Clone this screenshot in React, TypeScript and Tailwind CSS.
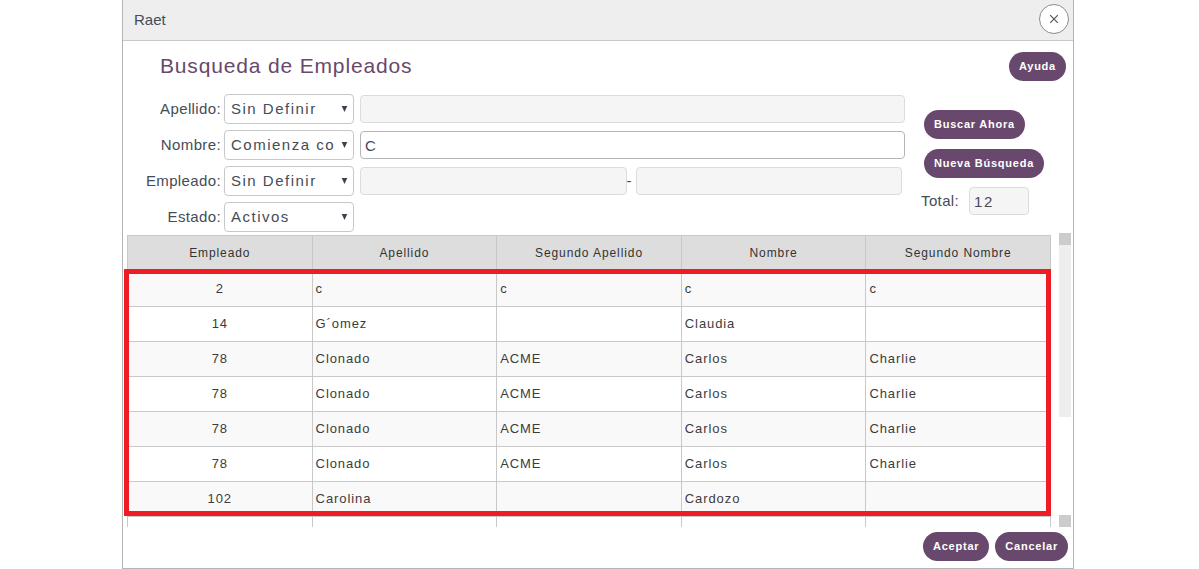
import type { ReactNode } from "react";

interface Employee {
  id: string;
  lastName: string;
  secondLastName: string;
  firstName: string;
  secondName: string;
}

const clonado: Employee = {
  id: "78",
  lastName: "Clonado",
  secondLastName: "ACME",
  firstName: "Carlos",
  secondName: "Charlie",
};

const employees: Employee[] = [
  { id: "2", lastName: "c", secondLastName: "c", firstName: "c", secondName: "c" },
  { id: "14", lastName: "G´omez", secondLastName: "", firstName: "Claudia", secondName: "" },
  clonado,
  clonado,
  clonado,
  clonado,
  { id: "102", lastName: "Carolina", secondLastName: "", firstName: "Cardozo", secondName: "" },
  { id: "", lastName: "", secondLastName: "", firstName: "", secondName: "" },
];

const columns = ["Empleado", "Apellido", "Segundo Apellido", "Nombre", "Segundo Nombre"];

const operators = ["Sin Definir", "Comienza con", "Contiene"];

function PillButton({ children }: { children: ReactNode }) {
  return (
    <button
      type="button"
      className="h-[29px] shrink-0 rounded-full bg-[#69486d] px-[10px] text-[11px] font-bold tracking-[0.07em] whitespace-nowrap text-white"
    >
      {children}
    </button>
  );
}

function TextField({ id, label, value = "", disabled = false }: {
  id?: string;
  label: string;
  value?: string;
  disabled?: boolean;
}) {
  return (
    <input
      id={id}
      type="text"
      aria-label={label}
      defaultValue={value}
      disabled={disabled}
      className="h-7 w-full min-w-0 flex-1 rounded-[4px] border border-[#b5b5b5] bg-white px-1 text-[15px] tracking-widest text-[#444c58] disabled:border-[#dcdcdc] disabled:bg-[#f5f5f5]"
    />
  );
}

function FilterRow({ id, label, options, value, children }: {
  id: string;
  label: string;
  options: string[];
  value: string;
  children?: ReactNode;
}) {
  return (
    <div className="flex items-center">
      <label htmlFor={id} className="mr-[3px] w-24 shrink-0 text-right tracking-wide">
        {label}:
      </label>
      <div className="relative mr-[6px] w-[130px] shrink-0">
        <select
          id={id}
          defaultValue={value}
          className="block h-[30px] w-full appearance-none rounded-[4px] border border-[#c8c8c8] bg-white pr-[18px] pl-[6px] text-[15px] tracking-widest text-[#444c58]"
        >
          {options.map((option) => (
            <option key={option}>{option}</option>
          ))}
        </select>
        <svg viewBox="0 0 7 6" className="pointer-events-none absolute top-3 right-[6px] h-[6px] w-[7px]" fill="#37434d">
          <path d="M0.7 0h5.6L3.5 6z" />
        </svg>
      </div>
      {children}
    </div>
  );
}

export default function App() {
  return (
    <div className="flex min-h-screen justify-center bg-white pr-[3px] font-['Liberation_Sans',Arial,sans-serif] text-[15px] text-[#444c58]">
      <div role="dialog" aria-label="Raet" className="flex w-full max-w-[952px] flex-col border border-t-0 border-[#b3b3b8]">
        <header className="flex h-[41px] items-start justify-between border-b border-[#c8c8c8] bg-[#eeeeee] pt-1 pr-1 pl-[11px]">
          <span className="leading-8">Raet</span>
          <button
            type="button"
            aria-label="Cerrar"
            className="flex size-[30px] items-center justify-center rounded-full border border-[#8c8c8c] bg-white"
          >
            <svg viewBox="0 0 10 10" className="size-[10px]" fill="none" stroke="#555" strokeWidth="1.2">
              <path d="M1.2 1.2l7.6 7.6M8.8 1.2L1.2 8.8" />
            </svg>
          </button>
        </header>

        <div className="flex items-start justify-between pt-[11px] pr-[7px] pb-[13px] pl-[37px]">
          <h1 className="text-[21px] leading-[27px] tracking-[0.04em] text-[#69486d]">Busqueda de Empleados</h1>
          <PillButton>Ayuda</PillButton>
        </div>

        <form className="flex gap-4 pl-[2px]">
          <div className="flex min-w-0 flex-1 flex-col gap-[6px]">
            <FilterRow id="apellido" label="Apellido" options={operators} value="Sin Definir">
              <TextField label="Valor de apellido" disabled />
            </FilterRow>
            <FilterRow id="nombre" label="Nombre" options={operators} value="Comienza con">
              <TextField label="Valor de nombre" value="C" />
            </FilterRow>
            <FilterRow id="empleado" label="Empleado" options={operators} value="Sin Definir">
              <div className="flex flex-1 items-center pr-[3px]">
                <TextField label="Empleado desde" disabled />
                <span className="w-[9px]">-</span>
                <TextField label="Empleado hasta" disabled />
              </div>
            </FilterRow>
            <FilterRow id="estado" label="Estado" options={["Activos", "Inactivos"]} value="Activos" />
          </div>
          <div className="flex w-[152px] shrink-0 flex-col items-start gap-[9px] pt-4">
            <div className="flex flex-col items-start gap-[10px] pl-[3px]">
              <PillButton>Buscar Ahora</PillButton>
              <PillButton>Nueva Búsqueda</PillButton>
            </div>
            <div className="flex items-center gap-[10px]">
              <label htmlFor="total" className="tracking-wide">Total:</label>
              <div className="flex w-[60px]">
                <TextField id="total" label="Total" value="12" disabled />
              </div>
            </div>
          </div>
        </form>

        <div className="mt-px flex gap-2 pr-[2px] pl-1">
          <div className="relative mt-[2px] h-[292px] flex-1">
            <div className="h-full overflow-hidden">
              <table className="w-full table-fixed border-separate border-spacing-0 border-l border-[#c8c8c8] text-[13px] tracking-[0.07em] text-[#3c3c3c]">
                <thead>
                  <tr className="h-9 bg-[#dddddd] text-xs">
                    {columns.map((column) => (
                      <th key={column} className="border-t border-r border-[#c8c8c8] px-0 pt-0 pb-[2px] font-normal text-[#333333]">
                        {column}
                      </th>
                    ))}
                  </tr>
                </thead>
                <tbody>
                  {employees.map((employee, index) => (
                    <tr key={index} className="h-[35px] odd:bg-[#f9f9f9]">
                      <td className="border-t border-r border-[#c8c8c8] p-0 text-center">{employee.id}</td>
                      <td className="border-t border-r border-[#c8c8c8] px-[3px] py-0">{employee.lastName}</td>
                      <td className="border-t border-r border-[#c8c8c8] px-[3px] py-0">{employee.secondLastName}</td>
                      <td className="border-t border-r border-[#c8c8c8] px-[3px] py-0">{employee.firstName}</td>
                      <td className="border-t border-r border-[#c8c8c8] px-[3px] py-0">{employee.secondName}</td>
                    </tr>
                  ))}
                </tbody>
              </table>
            </div>
            {/* Recuadro rojo sobre los resultados */}
            <div className="pointer-events-none absolute top-[34px] right-0 bottom-[11px] -left-[3px] border-5 border-[#ee1c25]" />
          </div>
          <div className="flex w-3 flex-col">
            <div className="size-3 bg-[#cccccc]" />
            <div className="h-[172px] bg-[#eeeeee]" />
            <div className="mt-auto size-3 bg-[#cccccc]" />
          </div>
        </div>

        <footer className="flex justify-end gap-[6px] pt-[5px] pr-[5px] pb-[7px]">
          <PillButton>Aceptar</PillButton>
          <PillButton>Cancelar</PillButton>
        </footer>
      </div>
    </div>
  );
}
